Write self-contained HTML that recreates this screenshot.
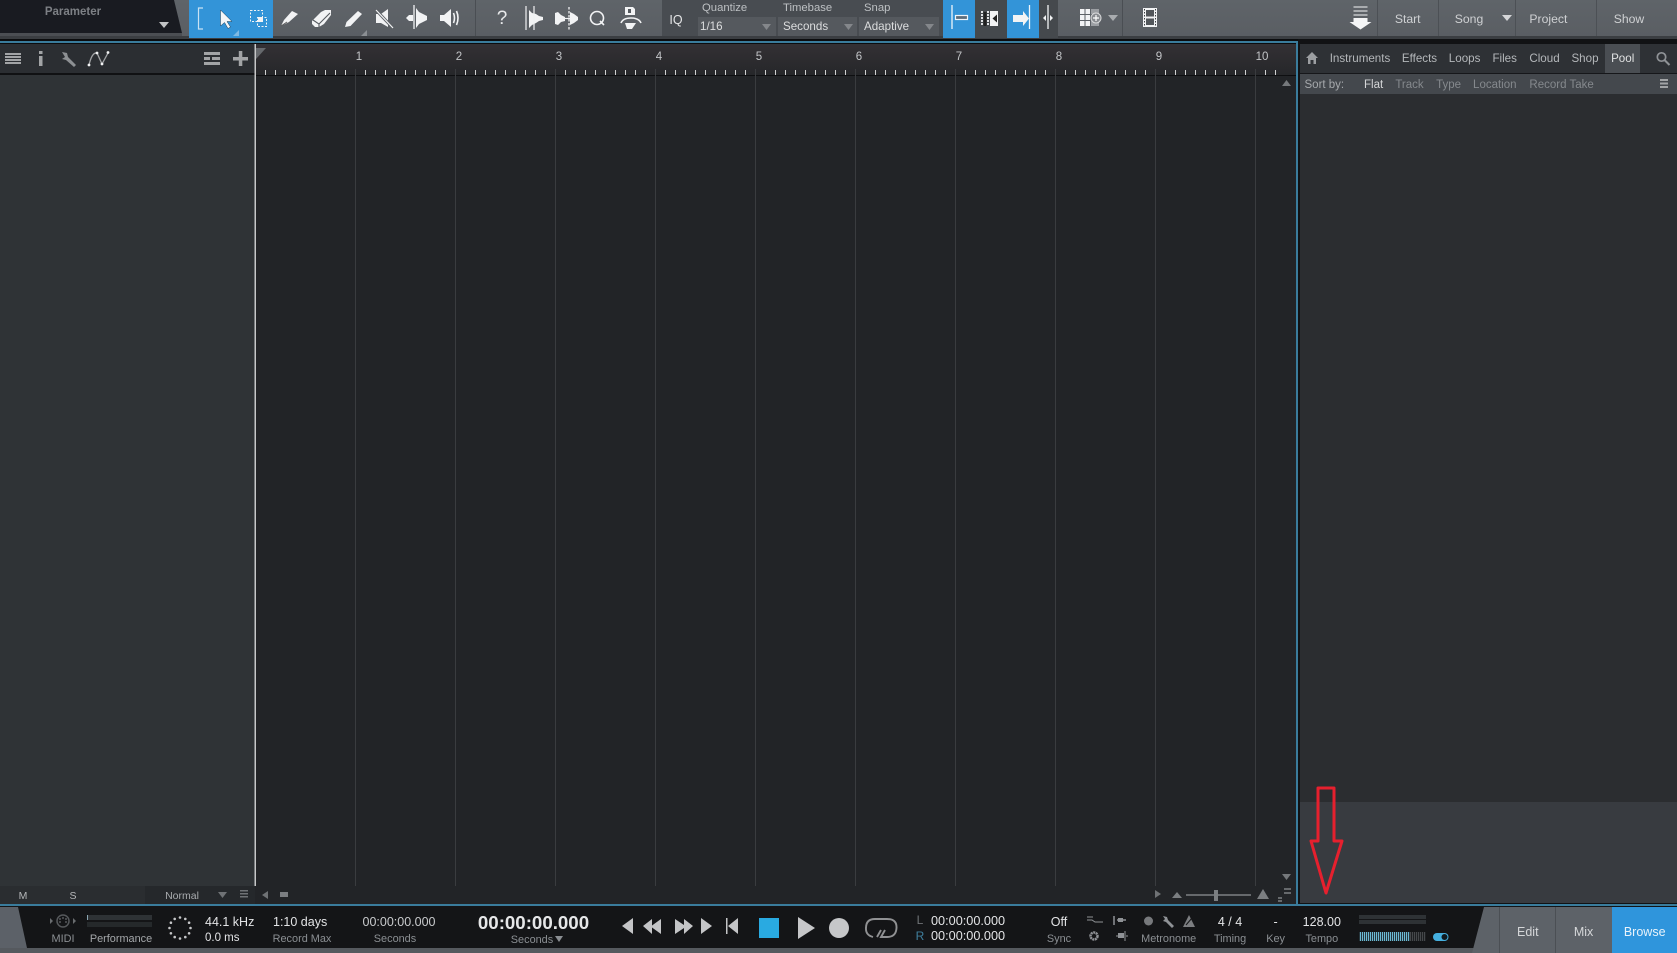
<!DOCTYPE html>
<html><head><meta charset="utf-8"><title>Studio One</title>
<style>
html,body{margin:0;padding:0;background:#0c0d0f;width:1677px;height:953px;overflow:hidden}
svg{display:block;font-family:"Liberation Sans",sans-serif}
text{font-size:12px}
.t{fill:#c9cbcd;font-size:12.5px}
.l{fill:#8b8f93;font-size:10.9px;text-anchor:middle}
.w{fill:#e3e4e6;font-size:12.5px}
.m{text-anchor:middle}
.tab{fill:#b4b7ba;font-size:11.6px;text-anchor:middle}
.so{fill:#85898d;font-size:11.5px;text-anchor:middle}
.ic{fill:none;stroke:#f2f3f4;stroke-width:1.6}
.f{fill:#f2f3f4}
.tr{fill:#c4c5c7}
</style></head><body>
<svg width="1677" height="953" viewBox="0 0 1677 953" xmlns="http://www.w3.org/2000/svg">
<defs>
<linearGradient id="tb" x1="0" y1="0" x2="0" y2="1"><stop offset="0" stop-color="#5f6469"/><stop offset="1" stop-color="#5a5e63"/></linearGradient>
<linearGradient id="rul" x1="0" y1="0" x2="0" y2="1"><stop offset="0" stop-color="#333034"/><stop offset="1" stop-color="#26272a"/></linearGradient>
<pattern id="tick" x="265" y="70" width="10" height="5" patternUnits="userSpaceOnUse"><rect x="0" y="0" width="1" height="5" fill="#cfd0d1"/></pattern>
<pattern id="bar" x="355" y="0" width="100" height="10" patternUnits="userSpaceOnUse"><rect x="0" y="0" width="1" height="10" fill="#3a3c3f"/></pattern>
<pattern id="lvl" x="0" y="0" width="2" height="10" patternUnits="userSpaceOnUse"><rect x="0" y="0" width="1.2" height="10" fill="#6bb9d3"/></pattern>
<pattern id="lvg" x="0" y="0" width="2" height="10" patternUnits="userSpaceOnUse"><rect x="0" y="0" width="1.2" height="10" fill="#45484b"/></pattern>
</defs>

<!-- top toolbar -->
<rect x="0" y="0" width="1677" height="37" fill="url(#tb)"/>
<rect x="0" y="36" width="1677" height="3" fill="#3b3e42"/>
<polygon points="0,0 174,0 182,33 0,33" fill="#191b21"/>
<rect x="0" y="33" width="182" height="3" fill="#4b4e53"/>
<text x="73" y="15" fill="#7d8085" font-weight="bold" text-anchor="middle" style="font-size:11.5px">Parameter</text>
<polygon points="159,22 169,22 164,28" fill="#c2c4c6"/>

<rect x="189" y="0" width="84" height="38" fill="#3394d8"/>
<path d="M203 8H198.500V29H203" fill="none" stroke="#c9e2f4" stroke-width="1.200"/>
<path d="M220.500 10V26L224.500 22.500L228 28.500L230.500 27L227 21.500H232Z" fill="#f4f6f8" stroke="#1d3a50" stroke-width=".5"/>
<rect x="250.500" y="10.500" width="12" height="11" fill="none" stroke="#f2f3f4" stroke-dasharray="2 1.500"/>
<rect x="257.500" y="17.500" width="9" height="9" fill="none" stroke="#f2f3f4" stroke-dasharray="2 1.500"/>
<rect x="258" y="17" width="5" height="5" class="f"/>
<polygon points="239,36 239,30 233,36" fill="#7fb9e4"/>

<path d="M281 26L284 20L292 11L298 14L289 22Z" class="f"/>
<path d="M281 26L287 22" stroke="#555" stroke-width=".8"/>
<path d="M312 21L321 12L325 10H331V15L324 24L319 27H315L312 24Z" class="f"/><path d="M313 20L319 24V27M319 24L330 13" fill="none" stroke="#555a5f" stroke-width="1.100"/>
<path d="M345 27L346.500 22L358 11L362 14L350.500 26Z" class="f"/>
<polygon points="367,36 367,30 361,36" fill="#8b8f93"/>
<path d="M376 14H381L388 9V27L381 23H376Z" class="f"/><path d="M376 10L393 28" stroke="#5c6065" stroke-width="3"/><path d="M376 10L393 28" stroke="#f2f3f4" stroke-width="1.200"/>
<path d="M414 5V29" stroke="#f2f3f4" stroke-width="1.300"/>
<path d="M416 8L419 12L423 14L427 16V20L423 22L419 24L416 28Z" class="f"/>
<path d="M406 18L409 15H413V21H409Z" class="f"/>
<path d="M440 15H444L451 9V27L444 21H440Z" class="f"/>
<path d="M453.500 13Q455.500 18 453.500 23M456.500 11Q459.500 18 456.500 25" class="ic" stroke-width="1.200"/>
<rect x="475" y="0" width="1" height="36" fill="#4a4e53"/>
<text x="502" y="24" fill="#e8e9ea" style="font-size:19px" text-anchor="middle">?</text>
<path d="M528 14V22M529 10L532 13L536 14L539 16L543 17V20L539 21L536 23L532 25L529 28Z" class="f"/>
<path d="M526 6V30M534 6V30" stroke="#f0f1f2" stroke-width="1.200"/>
<path d="M555 13L558 12L561 15L565 17V21L561 22L558 25L555 24Z" class="f"/>
<path d="M569 7V30" stroke="#f0f1f2" stroke-width="1.300" stroke-dasharray="2.500 1.500"/>
<path d="M560 18.500H570" stroke="#f0f1f2" stroke-width="1.200"/>
<path d="M570 12L574 14L578 17V20L574 23L570 25Z" class="f"/>
<circle cx="597" cy="18" r="6.500" class="ic" stroke-width="1.700"/><path d="M600 21L604 25" class="ic" stroke-width="1.700"/>
<path d="M625 7H633L635 9V15H625Z" class="f"/><rect x="628" y="9" width="3" height="4" fill="#555a5f"/>
<path d="M621 23Q623 18 631 18Q639 18 641 23" class="ic" stroke-width="2"/>
<polygon points="625,23 636,23 632,29 627,29" class="f"/>

<!-- quantize section -->
<rect x="662" y="0" width="281" height="36" fill="#484c51"/>
<text x="676" y="24" fill="#e5e6e7" text-anchor="middle" style="font-size:12.500px">IQ</text>
<text x="702" y="11" fill="#bdc0c3" style="font-size:11.300px">Quantize</text>
<text x="783" y="11" fill="#bdc0c3" style="font-size:11.300px">Timebase</text>
<text x="864" y="11" fill="#bdc0c3" style="font-size:11.300px">Snap</text>
<rect x="698" y="17" width="78" height="19" fill="#55595e"/>
<rect x="778" y="17" width="79" height="19" fill="#55595e"/>
<rect x="859" y="17" width="80" height="19" fill="#55595e"/>
<text x="700" y="30" fill="#dcddde" style="font-size:11.600px">1/16</text>
<text x="783" y="30" fill="#dcddde" style="font-size:11.600px">Seconds</text>
<text x="864" y="30" fill="#dcddde" style="font-size:11.600px">Adaptive</text>
<polygon points="762,24 771,24 766.500,30" fill="#84878b"/>
<polygon points="844,24 853,24 848.500,30" fill="#84878b"/>
<polygon points="925,24 934,24 929.500,30" fill="#84878b"/>

<rect x="943" y="0" width="32" height="38" fill="#3394d8"/>
<rect x="975" y="0" width="32" height="38" fill="#45494d"/>
<rect x="1007" y="0" width="32" height="38" fill="#3394d8"/>
<rect x="1039" y="0" width="19" height="38" fill="#45494d"/>
<path d="M952 5V29" stroke="#eef5fb" stroke-width="1.300"/><rect x="955.500" y="15.500" width="12" height="4" fill="#5b6d7c" stroke="#eef5fb" stroke-width="1.200"/>
<path d="M982 11V26M988 11V26" stroke="#f2f3f4" stroke-width="1.800" stroke-dasharray="2 1"/><rect x="983.500" y="12" width="3" height="14" fill="#222"/>
<rect x="990" y="11" width="8" height="15" class="f"/><polygon points="997,14.500 992.500,18.500 997,22.500" fill="#222"/>
<path d="M1013 15H1023V11L1029 18.500L1023 26V22H1013Z" class="f"/><path d="M1029.500 5V29" stroke="#eef5fb" stroke-width="1.300"/>
<path d="M1048 5V29" stroke="#f2f3f4" stroke-width="1.300"/><polygon points="1046,15 1046,21 1043,18" class="f"/><polygon points="1050,15 1050,21 1053,18" class="f"/>
<g class="f"><rect x="1080" y="9" width="4.500" height="5"/><rect x="1085.500" y="9" width="4.500" height="5"/><rect x="1080" y="15" width="4.500" height="5"/><rect x="1085.500" y="15" width="4.500" height="5"/><rect x="1080" y="21" width="4.500" height="5"/><rect x="1085.500" y="21" width="4.500" height="5"/></g>
<rect x="1091" y="9" width="8" height="5" fill="#9c9fa3"/><rect x="1091" y="21" width="8" height="5" fill="#9c9fa3"/>
<circle cx="1096" cy="18" r="5" fill="#888b8f" stroke="#d9dadb"/><path d="M1093 18H1099M1096 15V21" stroke="#fff" stroke-width="1.200"/>
<polygon points="1108,15 1118,15 1113,21" fill="#a9acaf"/>
<rect x="1122" y="0" width="1" height="36" fill="#4a4e53"/>
<rect x="1143" y="8" width="14" height="19" class="f"/>
<rect x="1146" y="10" width="8" height="6.500" fill="#52565a"/><rect x="1146" y="18.500" width="8" height="6.500" fill="#52565a"/>
<path d="M1144.500 9V27M1155.500 9V27" stroke="#3c3f42" stroke-width="1" stroke-dasharray="1.500 1.500"/>

<!-- right toolbar -->
<g fill="#a9acaf"><rect x="1353.500" y="6" width="14" height="2"/><rect x="1353.500" y="10" width="14" height="2"/><rect x="1353.500" y="14" width="14" height="2"/></g>
<path d="M1353.500 18H1367.500V22H1371.500L1360.500 29.500L1349.500 22H1353.500Z" fill="#f4f5f6"/>
<g fill="#4c5055"><rect x="1377" y="0" width="1" height="36"/><rect x="1438" y="0" width="1" height="36"/><rect x="1515" y="0" width="1" height="36"/><rect x="1596" y="0" width="1" height="36"/></g>
<text x="1407.700" y="23" class="w m" style="fill:#cfd1d3;font-size:12.200px">Start</text>
<text x="1469" y="23" class="w m" style="fill:#cfd1d3;font-size:12.200px">Song</text>
<polygon points="1502,15 1512,15 1507,21" fill="#d5d6d8"/>
<text x="1548.400" y="23" class="w m" style="fill:#cfd1d3;font-size:12.200px">Project</text>
<text x="1629" y="23" class="w m" style="fill:#cfd1d3;font-size:12.200px">Show</text>

<!-- blue frame of arrange -->
<rect x="0" y="39" width="1677" height="5" fill="#0c0d0f"/>
<rect x="0" y="41" width="1298" height="2" fill="#3a7c9c"/>
<rect x="1296" y="41" width="2" height="864" fill="#3a7c9c"/>
<rect x="1298" y="39" width="379" height="866" fill="#111214"/>

<!-- left column -->
<rect x="0" y="44" width="255" height="29" fill="#2b2e32"/>
<rect x="0" y="73" width="255" height="2" fill="#101113"/>
<rect x="0" y="75" width="255" height="811" fill="#2f3336"/>
<g fill="#a2a4a6">
<rect x="5" y="53" width="16" height="2"/><rect x="5" y="56" width="16" height="2"/><rect x="5" y="59" width="16" height="2"/><rect x="5" y="62" width="16" height="2"/>
<rect x="39" y="51" width="3.500" height="3"/><rect x="39" y="56" width="3.500" height="10"/>
<rect x="204" y="52" width="16" height="3"/><rect x="204" y="57" width="6" height="3"/><rect x="212" y="57" width="8" height="3"/><rect x="204" y="62" width="16" height="3"/>
<rect x="233" y="57" width="15" height="3.500"/><rect x="238.800" y="51" width="3.500" height="15"/>
</g>
<path d="M62 52L67 53L68 57L76 65L74 67L66 60L62 59L65 57Z" fill="#8d9093"/>
<path d="M89 65Q92 52 97 53L102 64L108 53" fill="none" stroke="#a2a4a6" stroke-width="1.300"/>
<g class="f"><circle cx="89" cy="65" r="1.400"/><circle cx="97" cy="53" r="1.400"/><circle cx="102" cy="64" r="1.400"/><circle cx="108" cy="52.500" r="1.400"/></g>

<!-- ruler & timeline -->
<rect x="256" y="44" width="1040" height="31" fill="url(#rul)"/>
<rect x="256" y="76" width="1040" height="810" fill="#222427"/>
<rect x="256" y="75" width="1032" height="1" fill="#0e0f11"/>
<rect x="265" y="70" width="1020" height="5" fill="url(#tick)"/>
<rect x="355" y="69" width="905" height="817" fill="url(#bar)"/>
<rect x="254.500" y="44" width="1.500" height="842" fill="#c6c7c8"/>
<polygon points="256,48 266,48 256,59" fill="#66696d"/>
<g fill="#c3c5c8" text-anchor="middle">
<text x="359" y="60" style="font-size:11.500px">1</text><text x="459" y="60" style="font-size:11.500px">2</text><text x="559" y="60" style="font-size:11.500px">3</text><text x="659" y="60" style="font-size:11.500px">4</text><text x="759" y="60" style="font-size:11.500px">5</text><text x="859" y="60" style="font-size:11.500px">6</text><text x="959" y="60" style="font-size:11.500px">7</text><text x="1059" y="60" style="font-size:11.500px">8</text><text x="1159" y="60" style="font-size:11.500px">9</text><text x="1262" y="60" style="font-size:11.500px">10</text>
</g>
<polygon points="1282,86 1291,86 1286.500,80" fill="#75787b"/>
<polygon points="1282,874 1291,874 1286.500,880" fill="#75787b"/>

<!-- footer of arrange -->
<rect x="0" y="886" width="255" height="18" fill="#2a2d30"/>
<rect x="145" y="886" width="110" height="18" fill="#25282b"/>
<rect x="255" y="886" width="1041" height="18" fill="#222427"/>
<text x="23" y="899" fill="#b5b7b9" text-anchor="middle" style="font-size:10.500px">M</text>
<text x="73" y="899" fill="#b5b7b9" text-anchor="middle" style="font-size:10.500px">S</text>
<text x="182" y="899" fill="#a9acaf" text-anchor="middle" style="font-size:10.500px">Normal</text>
<polygon points="218,892 227,892 222.500,898" fill="#6f7275"/>
<g fill="#6f7275"><rect x="240" y="890" width="8" height="1.500"/><rect x="240" y="893" width="8" height="1.500"/><rect x="240" y="896" width="8" height="1.500"/></g>
<polygon points="268,891 268,899 262,895" fill="#6f7275"/>
<rect x="280" y="892" width="8" height="5" fill="#7b7e81"/>
<polygon points="1155,890 1155,898 1161,894" fill="#6f7275"/>
<polygon points="1172,898 1182,898 1177,892" fill="#7b7e81"/>
<rect x="1186" y="894" width="65" height="2" fill="#66696c"/>
<rect x="1214" y="890" width="4" height="11" fill="#7b7e81"/>
<polygon points="1257,899 1269,899 1263,889" fill="#7b7e81"/>
<g fill="#66696c"><rect x="1284" y="888" width="7" height="2"/><rect x="1284" y="892" width="7" height="2"/><rect x="1278" y="897" width="4" height="2"/><rect x="1278" y="900" width="4" height="2"/></g>

<!-- right browser -->
<rect x="1300" y="44" width="377" height="29" fill="#2e3135"/>
<rect x="1300" y="73" width="377" height="1" fill="#16171a"/>
<rect x="1300" y="74" width="377" height="20" fill="#44484d"/>
<rect x="1300" y="94" width="377" height="708" fill="#2b2d30"/>
<rect x="1300" y="802" width="377" height="101" fill="#383b40"/>
<rect x="1605" y="44" width="35" height="29" fill="#4a4e53"/>
<path d="M1312 52L1318 58H1316V64H1313.500V60H1310.500V64H1308V58H1306Z" fill="#9c9fa2"/>
<text x="1360" y="62" class="tab">Instruments</text>
<text x="1419.500" y="62" class="tab">Effects</text>
<text x="1464.600" y="62" class="tab">Loops</text>
<text x="1504.700" y="62" class="tab">Files</text>
<text x="1544.500" y="62" class="tab">Cloud</text>
<text x="1585" y="62" class="tab">Shop</text>
<text x="1622.700" y="62" class="tab" style="fill:#e1e2e3">Pool</text>
<circle cx="1661.500" cy="57" r="4.200" fill="none" stroke="#8f9296" stroke-width="1.700"/><path d="M1664.500 60L1669.500 65" stroke="#8f9296" stroke-width="2"/>
<text x="1304.500" y="88" fill="#a6a9ac" style="font-size:11.500px">Sort by:</text>
<text x="1373.600" y="88" class="so" style="fill:#d5d6d8">Flat</text>
<text x="1409.500" y="88" class="so">Track</text>
<text x="1448.600" y="88" class="so">Type</text>
<text x="1494.800" y="88" class="so">Location</text>
<text x="1561.600" y="88" class="so">Record Take</text>
<g fill="#a2a4a6"><rect x="1660" y="79" width="8" height="2"/><rect x="1660" y="82.500" width="8" height="2"/><rect x="1660" y="86" width="8" height="2"/></g>

<!-- red arrow -->
<path d="M1318 788H1334V841H1342L1326 893L1311 841H1318Z" fill="none" stroke="#e6202e" stroke-width="3" stroke-linejoin="round"/>

<!-- transport -->
<rect x="0" y="904" width="1677" height="2" fill="#3a7c9c"/>
<rect x="0" y="906" width="1677" height="42" fill="#141517"/>
<rect x="0" y="948" width="1677" height="5" fill="#55595e"/>
<polygon points="0,907 18,907 27,948 0,948" fill="#5c6168"/>
<polygon points="1484,907 1677,907 1677,953 1472,953" fill="#5d6268"/>
<rect x="1499" y="907" width="1" height="46" fill="#4b4f54"/>
<rect x="1555" y="907" width="1" height="46" fill="#4b4f54"/>
<rect x="1612" y="907" width="65" height="46" fill="#2f95dc"/>
<text x="1527.800" y="936" class="m" fill="#d5d7d9" style="font-size:12.500px">Edit</text>
<text x="1583.600" y="936" class="m" fill="#d5d7d9" style="font-size:12.500px">Mix</text>
<text x="1644.700" y="936" class="m" fill="#e9f3fb" style="font-size:12.500px">Browse</text>

<circle cx="63" cy="921" r="6" fill="none" stroke="#55585b" stroke-width="1.500"/>
<g fill="#696c6f"><circle cx="60" cy="919" r=".9"/><circle cx="63" cy="918" r=".9"/><circle cx="66" cy="919" r=".9"/><circle cx="60" cy="922" r=".9"/><circle cx="66" cy="922" r=".9"/><polygon points="50,918 50,924 53,921"/><polygon points="73,918 73,924 76,921"/></g>
<text x="63" y="942" class="l">MIDI</text>
<rect x="87" y="915" width="65" height="5" fill="#2e3235"/><rect x="87" y="922" width="65" height="5" fill="#25292b"/><rect x="87" y="915" width="1" height="5" fill="#8aa6b2"/>
<text x="121" y="942" class="l" style="fill:#a4a7aa">Performance</text>
<g fill="#c6c7c9"><circle cx="180" cy="917.500" r="1.300"/><circle cx="185.300" cy="918.900" r="1.300"/><circle cx="189.100" cy="922.700" r="1.300"/><circle cx="190.500" cy="928" r="1.300"/><circle cx="189.100" cy="933.300" r="1.300"/><circle cx="185.300" cy="937.100" r="1.300"/><circle cx="180" cy="938.500" r="1.300"/><circle cx="174.700" cy="937.100" r="1.300"/><circle cx="170.900" cy="933.300" r="1.300"/><circle cx="169.500" cy="928" r="1.300"/><circle cx="170.900" cy="922.700" r="1.300"/><circle cx="174.700" cy="918.900" r="1.300"/></g>
<text x="205" y="926" class="w">44.1 kHz</text>
<text x="205" y="941" class="w" style="font-size:11.500px">0.0 ms</text>
<text x="273" y="926" class="w">1:10 days</text>
<text x="302" y="942" class="l">Record Max</text>
<text x="399" y="926" class="t m">00:00:00.000</text>
<text x="395" y="942" class="l">Seconds</text>
<text x="533.500" y="929" fill="#e6e7e8" font-weight="bold" class="m" style="font-size:18.700px">00:00:00.000</text>
<text x="532" y="943" class="l">Seconds</text>
<polygon points="555,936 563,936 559,942" fill="#8b8f93"/>

<g class="tr"><polygon points="633,918 633,934 622,926"/><polygon points="643,926 652,919 652,925.500 661,919 661,934 652,927.500 652,934"/><polygon points="675,919 684,925 684,919 693,926 684,934 684,928 675,934"/><polygon points="701,918 712,926 701,934"/><rect x="726" y="918" width="1.500" height="16"/><polygon points="738,918 738,934 728,926"/></g>
<rect x="759" y="918" width="20" height="20" fill="#29aae1"/>
<polygon points="798,917 815,928 798,939" fill="#c6c7c9"/>
<circle cx="839" cy="928" r="10" fill="#c6c7c9"/>
<path d="M873 937Q865.500 935 866 928Q866 919 875 919H887Q897 919 896.500 928Q896 937 887 937H881L885 930M877 937L881 930" fill="none" stroke="#909193" stroke-width="1.900"/>
<text x="920" y="924" fill="#6f7276" class="m" style="font-size:12px">L</text>
<text x="920" y="940" fill="#3f7f9e" class="m" style="font-size:12px">R</text>
<text x="931" y="925" class="w" style="font-size:12.700px">00:00:00.000</text>
<text x="931" y="940" class="w" style="font-size:12.700px">00:00:00.000</text>
<text x="1059" y="926" class="w m">Off</text>
<text x="1059" y="942" class="l">Sync</text>
<path d="M1087 920H1092L1095 922H1103M1087 917H1093" fill="none" stroke="#8f9296" stroke-width="1"/>
<circle cx="1094" cy="936" r="3.500" fill="none" stroke="#8f9296" stroke-width="2.500" stroke-dasharray="2 .6"/>
<path d="M1114 916V925M1117 920H1126" stroke="#8f9296" stroke-width="1.500"/><rect x="1118" y="918" width="5" height="4" fill="#8f9296"/>
<path d="M1116 936H1120M1126 936H1128" stroke="#8f9296" stroke-width="1"/><rect x="1118" y="933" width="6" height="5" fill="#8f9296"/><path d="M1125 931V941" stroke="#8f9296"/>
<circle cx="1148.500" cy="921" r="4.500" fill="#77797c"/>
<path d="M1163 916L1167 917L1168 920L1174 926L1172 928L1166 922L1163 921L1165 919Z" fill="#8f9296"/>
<polygon points="1189,915 1195,927 1183,927" fill="#7c7e81"/><path d="M1186 925L1192 918" stroke="#141517" stroke-width="1"/>
<text x="1168.700" y="942" class="l">Metronome</text>
<text x="1230" y="926" class="w m">4 / 4</text>
<text x="1230" y="942" class="l">Timing</text>
<text x="1275.600" y="926" class="w m">-</text>
<text x="1275.600" y="942" class="l">Key</text>
<text x="1321.800" y="926" class="w m">128.00</text>
<text x="1321.800" y="942" class="l">Tempo</text>
<rect x="1359" y="915" width="67" height="4" fill="#2e3235"/><rect x="1359" y="920" width="67" height="4" fill="#2e3235"/>
<rect x="1359" y="932" width="50.500" height="9" fill="url(#lvl)"/>
<rect x="1409.500" y="932" width="16" height="9" fill="url(#lvg)"/>
<rect x="1433" y="933" width="15.500" height="8" rx="4" fill="#45b0e0"/><circle cx="1444.500" cy="937" r="3" fill="#0f1a20"/>
</svg>
</body></html>
